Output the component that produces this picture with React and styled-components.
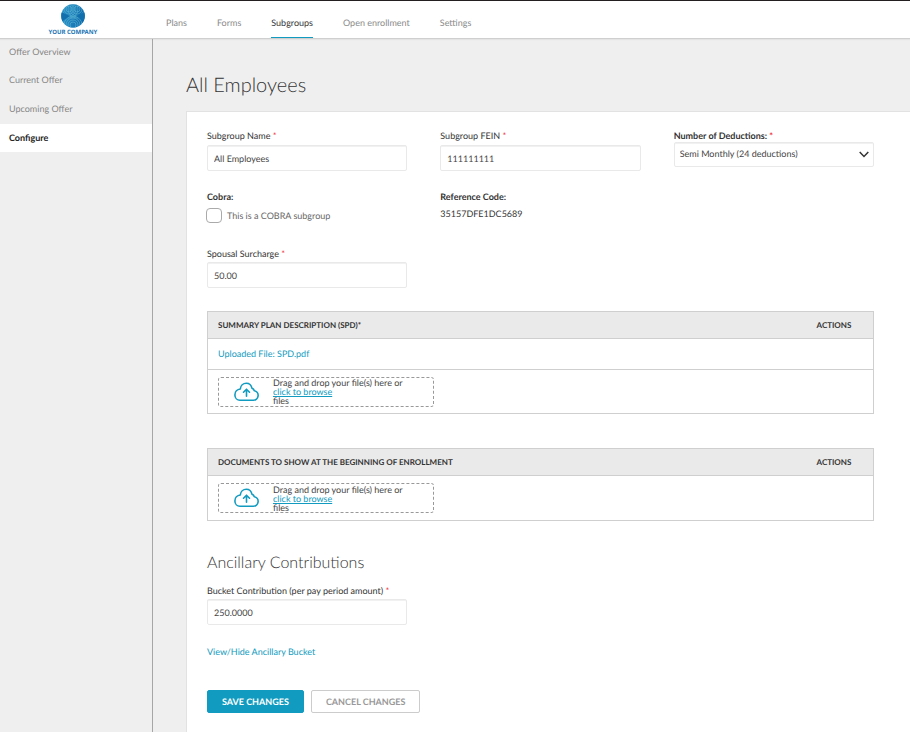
import React from "react";
import styled, { createGlobalStyle } from "styled-components";

const GlobalStyle = createGlobalStyle`
  *, *::before, *::after { box-sizing: border-box; }
  body {
    margin: 0;
    background: #efefef;
    color: #333;
    font-family: Lato, "Liberation Sans", sans-serif;
    font-size: 9px;
    line-height: 12px;
    text-rendering: geometricPrecision;
  }
  h1, h2, p { margin: 0; }
  a { text-decoration: none; }
  button, input, select { font: inherit; color: inherit; text-rendering: inherit; }
`;

const Page = styled.div`
  display: flex;
  flex-direction: column;
  min-height: 100vh;
`;

const Header = styled.header`
  display: flex;
  height: 39px;
  background: #fff;
  border-top: 1px solid #231f20;
  border-bottom: 1px solid #cfcfcf;
  box-shadow: 0 1px 1px #e4e4e4;
`;

const Brand = styled.a`
  display: flex;
  flex-direction: column;
  align-items: center;
  width: 146px;
  padding-top: 3px;
  color: #1b75b5;
`;

const BrandName = styled.span`
  font: 700 6px/8px "Noto Sans", "Open Sans", sans-serif;
`;

const Nav = styled.nav`
  display: flex;
  gap: 30px;
  padding-left: 20px;
`;

const NavLink = styled.a`
  padding-top: 16px;
  color: ${(p) => (p.$active ? "#333" : "#8a8a8a")};
  border-bottom: 1px solid ${(p) => (p.$active ? "#119bc0" : "transparent")};
`;

const Body = styled.div`
  display: flex;
  flex: 1;
`;

const Sidebar = styled.nav`
  display: flex;
  flex-direction: column;
  gap: 1px;
  flex: none;
  width: 153px;
  border-right: 1px solid #a6a6a6;
`;

const SideLink = styled.a`
  padding: 8px 9px;
  color: ${(p) => (p.$active ? "#222" : "#868686")};
  background: ${(p) => (p.$active ? "#fff" : "transparent")};
  font-weight: ${(p) => (p.$active ? 700 : 400)};
  &:first-child { padding: 7px 9px; }
`;

const Main = styled.main`
  display: flex;
  flex-direction: column;
  flex: 1;
  min-width: 0;
  padding: 32px 0 0 33px;
`;

const Title = styled.h1`
  margin-bottom: 12px;
  font-size: 20px;
  line-height: 28px;
  font-weight: 300;
`;

const Panel = styled.form`
  flex: 1;
  padding: 18px 36px 18px 20px;
  background: #fff;
  border: solid #e2e2e2;
  border-width: 1px 0 0 1px;
`;

const Row = styled.div`
  display: grid;
  grid-template-columns: repeat(3, 1fr);
  gap: 33px;
  margin-bottom: ${(p) => p.$after}px;
`;

const Field = styled.div`
  display: flex;
  flex-direction: column;
  gap: ${(p) => p.$gap || 0}px;
`;

const Label = styled.label`
  font-weight: ${(p) => (p.$bold ? 700 : 400)};
`;

const Caption = styled.p`
  font-weight: 700;
`;

const Star = styled.span`
  color: #f0323c;
`;

const TextBox = styled.input`
  width: 100%;
  height: 26px;
  padding: 0 6px;
  color: #444;
  background: #fff;
  border: 1px solid #e9e9e9;
  border-radius: 2px;
  box-shadow: inset 0 1px 0 #f1f1f1;
`;

const SelectWrap = styled.div`
  display: grid;
  align-items: center;
  > * { grid-area: 1 / 1; }
  > svg { justify-self: end; margin-right: 5px; pointer-events: none; }
`;

const Select = styled(TextBox).attrs({ as: "select" })`
  appearance: none;
  height: 25px;
  padding: 0 5px 1px;
`;

const CheckRow = styled.div`
  display: flex;
  align-items: center;
  gap: 5px;
  margin-left: -1px;
  color: #666;
`;

const CheckBox = styled.input`
  appearance: none;
  width: 16px;
  height: 15px;
  margin: 0;
  background: #fff;
  border: 1px solid #aaa;
  border-radius: 4px;
  &:checked { background: #119bc0; }
`;

const Link = styled.a`
  color: #119bc0;
`;

const Table = styled.table`
  width: 100%;
  margin-bottom: ${(p) => p.$after}px;
  border-collapse: collapse;
  border: 1px solid #cfcfcf;
`;

const HeadCell = styled.th`
  height: 27px;
  padding: 0 10px;
  width: ${(p) => (p.$actions ? "67px" : "auto")};
  background: #eaeaea;
  text-align: left;
  font-size: 8px;
  font-weight: 700;
`;

const Cell = styled.td`
  height: ${(p) => p.$height}px;
  padding: 0 10px;
  border-top: 1px solid #cfcfcf;
`;

const Drop = styled.div`
  display: flex;
  align-items: center;
  gap: 14px;
  width: 216px;
  height: 30px;
  padding-left: 15px;
  border: 1px dashed #999;
  border-radius: 3px;
  color: #444;
  line-height: 9px;
`;

const Browse = styled.a`
  display: block;
  width: max-content;
  color: #119bc0;
  text-decoration: underline;
`;

const Heading = styled.h2`
  margin-bottom: 12px;
  font-size: 16px;
  line-height: 20px;
  font-weight: 300;
`;

const Actions = styled.div`
  display: flex;
  gap: 7px;
  margin-top: 32px;
`;

const Button = styled.button`
  height: 23px;
  padding: 0 14px;
  color: ${(p) => (p.$primary ? "#fff" : "#999")};
  background: ${(p) => (p.$primary ? "#119bc0" : "#fff")};
  border: 1px solid ${(p) => (p.$primary ? "#119bc0" : "#ccc")};
  border-radius: 2px;
  font-size: 9px;
  font-weight: 700;
`;

function LogoMark() {
  const arcs = [3, 5, 7, 9];
  return (
    <svg width="24" height="24" viewBox="0 0 24 24" aria-hidden="true">
      <defs>
        <clipPath id="disc"><circle cx="12" cy="12" r="11.8" /></clipPath>
        <linearGradient id="sea" x1="0" x2="1">
          <stop offset="0" stopColor="#2a92c8" />
          <stop offset="1" stopColor="#0e66a8" />
        </linearGradient>
      </defs>
      <g clipPath="url(#disc)" fill="none" stroke="#54b0d3" strokeWidth=".7">
        <rect width="24" height="24" fill="url(#sea)" stroke="none" />
        {arcs.map((r) => (
          <g key={r}>
            <circle cx="8" cy="5" r={r} />
            <circle cx="16" cy="5" r={r} />
            <circle cx="12" cy="21" r={r} />
          </g>
        ))}
        <path d="M0 8l9 4-9 6zM24 8l-9 4 9 6z" fill="#126fae" stroke="none" />
      </g>
    </svg>
  );
}

function CloudUpload() {
  return (
    <svg width="25" height="20" viewBox="0 0 25 20" fill="none" stroke="#119bc0" strokeWidth="1.6" strokeLinecap="round" strokeLinejoin="round" aria-hidden="true">
      <path d="M6 18.2h13.2a4.8 4.8 0 0 0 1.1-9.5 3.6 3.6 0 0 0-2.3-2.4C17.3 3.1 15.1 1.2 12.3 1.2 9.2 1.2 6.6 3.6 6.3 7 3.2 7.3.9 9.8.9 12.9c0 3 2.2 5.3 5.1 5.3z" />
      <path d="M12.5 14.2V7.5M9.5 10.2l3-3 3 3" />
    </svg>
  );
}

function Chevron() {
  return (
    <svg width="10" height="7" viewBox="0 0 10 7" fill="none" stroke="#333" strokeWidth="1.5" aria-hidden="true">
      <path d="M.7 1L5 5.4 9.3 1" />
    </svg>
  );
}

function InputField({ id, label, value, gap }) {
  return (
    <Field $gap={gap}>
      <Label htmlFor={id}>{label} <Star>*</Star></Label>
      <TextBox id={id} defaultValue={value} />
    </Field>
  );
}

function DropZone() {
  return (
    <Drop>
      <CloudUpload />
      <div>Drag and drop your file(s) here or <Browse href="#browse">click to browse</Browse>files</div>
    </Drop>
  );
}

function FileTable({ title, uploaded, after }) {
  return (
    <Table $after={after}>
      <thead>
        <tr><HeadCell>{title}</HeadCell><HeadCell $actions>ACTIONS</HeadCell></tr>
      </thead>
      <tbody>
        {uploaded && (
          <tr><Cell colSpan={2} $height={31}><Link href="#file">{uploaded}</Link></Cell></tr>
        )}
        <tr><Cell colSpan={2} $height={uploaded ? 44 : 45}><DropZone /></Cell></tr>
      </tbody>
    </Table>
  );
}

export default function App() {
  return (
    <Page>
      <GlobalStyle />
      <Header>
        <Brand href="#home"><LogoMark /><BrandName>YOUR COMPANY</BrandName></Brand>
        <Nav>
          {["Plans", "Forms", "Subgroups", "Open enrollment", "Settings"].map((t) => (
            <NavLink key={t} href="#nav" $active={t === "Subgroups"}>{t}</NavLink>
          ))}
        </Nav>
      </Header>
      <Body>
        <Sidebar>
          {["Offer Overview", "Current Offer", "Upcoming Offer", "Configure"].map((t) => (
            <SideLink key={t} href="#section" $active={t === "Configure"}>{t}</SideLink>
          ))}
        </Sidebar>
        <Main>
          <Title>All Employees</Title>
          <Panel onSubmit={(e) => e.preventDefault()}>
            <Row $after={20}>
              <InputField id="name" label="Subgroup Name" value="All Employees" gap={3} />
              <InputField id="fein" label="Subgroup FEIN" value="111111111" gap={3} />
              <Field>
                <Label htmlFor="deductions" $bold>Number of Deductions: <Star>*</Star></Label>
                <SelectWrap>
                  <Select id="deductions"><option>Semi Monthly (24 deductions)</option></Select>
                  <Chevron />
                </SelectWrap>
              </Field>
            </Row>
            <Row $after={25}>
              <Field $gap={5}>
                <Caption>Cobra:</Caption>
                <CheckRow>
                  <CheckBox type="checkbox" id="cobra" />
                  <Label htmlFor="cobra">This is a COBRA subgroup</Label>
                </CheckRow>
              </Field>
              <Field $gap={5}>
                <Caption>Reference Code:</Caption>
                <p>35157DFE1DC5689</p>
              </Field>
            </Row>
            <Row $after={23}>
              <InputField id="surcharge" label="Spousal Surcharge" value="50.00" gap={2} />
            </Row>
            <FileTable title="SUMMARY PLAN DESCRIPTION (SPD)*" uploaded="Uploaded File: SPD.pdf" after={34} />
            <FileTable title="DOCUMENTS TO SHOW AT THE BEGINNING OF ENROLLMENT" after={32} />
            <Heading>Ancillary Contributions</Heading>
            <Row $after={21}>
              <InputField id="bucket" label="Bucket Contribution (per pay period amount)" value="250.0000" gap={2} />
            </Row>
            <Link href="#bucket">View/Hide Ancillary Bucket</Link>
            <Actions>
              <Button type="submit" $primary>SAVE CHANGES</Button>
              <Button type="button">CANCEL CHANGES</Button>
            </Actions>
          </Panel>
        </Main>
      </Body>
    </Page>
  );
}
